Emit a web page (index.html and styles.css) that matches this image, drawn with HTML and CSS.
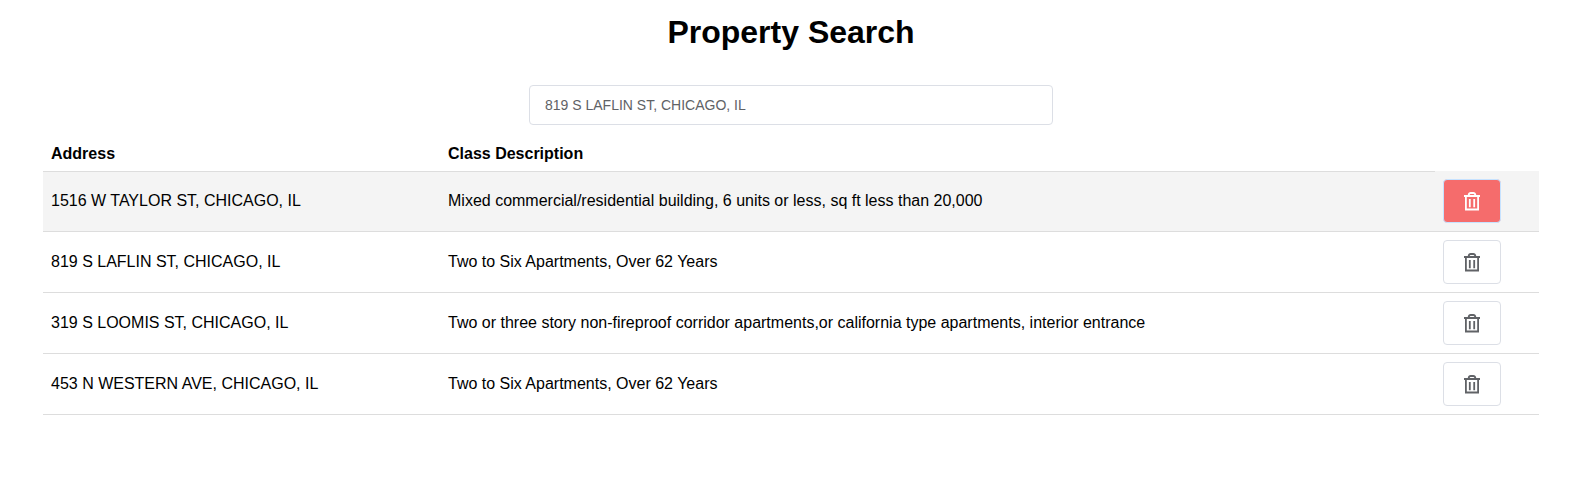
FILE: index.html
```html
<!DOCTYPE html>
<html lang="en">
<head>
<meta charset="utf-8">
<title>Property Search</title>
<link rel="stylesheet" href="styles.css">
</head>
<body>
<svg class="sprite" width="0" height="0" aria-hidden="true">
  <symbol id="trash" viewBox="0 0 16 19">
    <g fill="none" stroke="currentColor">
      <path d="M4.7 4V3Q5 1 6.7 1h2.6Q11 1 11.3 3V4" stroke-width="1.8"/>
      <path d="M0 4h16" stroke-width="2"/>
      <path d="M1.9 4v13.5h12.2V4M5.8 7v8.2M10.2 7v8.2" stroke-width="1.8"/>
    </g>
  </symbol>
</svg>
<main class="page">
  <h1 class="title">Property Search</h1>
  <input class="search" type="text" aria-label="Address" value="819 S LAFLIN ST, CHICAGO, IL">
  <table class="properties">
    <colgroup><col class="col-address"><col class="col-class"><col class="col-action"></colgroup>
    <thead>
      <tr><th>Address</th><th>Class Description</th></tr>
    </thead>
    <tbody>
      <tr class="selected">
        <td class="text">1516 W TAYLOR ST, CHICAGO, IL</td>
        <td class="text">Mixed commercial/residential building, 6 units or less, sq ft less than 20,000</td>
        <td><button class="delete delete-active" aria-label="Delete"><svg class="icon"><use href="#trash"/></svg></button></td>
      </tr>
      <tr>
        <td class="text">819 S LAFLIN ST, CHICAGO, IL</td>
        <td class="text">Two to Six Apartments, Over 62 Years</td>
        <td><button class="delete" aria-label="Delete"><svg class="icon"><use href="#trash"/></svg></button></td>
      </tr>
      <tr>
        <td class="text">319 S LOOMIS ST, CHICAGO, IL</td>
        <td class="text">Two or three story non-fireproof corridor apartments,or california type apartments, interior entrance</td>
        <td><button class="delete" aria-label="Delete"><svg class="icon"><use href="#trash"/></svg></button></td>
      </tr>
      <tr>
        <td class="text">453 N WESTERN AVE, CHICAGO, IL</td>
        <td class="text">Two to Six Apartments, Over 62 Years</td>
        <td><button class="delete" aria-label="Delete"><svg class="icon"><use href="#trash"/></svg></button></td>
      </tr>
    </tbody>
  </table>
</main>
</body>
</html>
```
FILE: styles.css
```css
* {
  box-sizing: border-box;
}

body {
  margin: 0;
  background: #fff;
  color: #000;
  font-family: "Liberation Sans", Arial, sans-serif;
  font-size: 16px;
}

.sprite {
  display: block;
}

.page {
  display: flex;
  flex-direction: column;
  align-items: center;
  width: 1496px;
  margin-left: 43px;
}

.title {
  margin: 14px 0 34px;
  font-size: 32px;
  line-height: 37px;
}

.search {
  width: 524px;
  height: 40px;
  padding: 0 15px;
  border: 1px solid #dcdfe6;
  border-radius: 4px;
  background: #fff;
  color: #606266;
  font: 14px "Liberation Sans", Arial, sans-serif;
  outline: none;
}

.properties {
  width: 100%;
  margin-top: 12px;
  border-collapse: separate;
  border-spacing: 0;
  table-layout: fixed;
}

.col-address {
  width: 397px;
}

.col-class {
  width: 995px;
}

.col-action {
  width: 104px;
}

.properties th,
.properties td {
  padding: 8px;
  line-height: 18px;
  text-align: left;
}

.properties td {
  height: 61px;
  border-bottom: 1px solid #ddd;
  vertical-align: middle;
}

.selected .text {
  box-shadow: inset 0 1px #ddd;
}

.selected {
  background: #f4f4f4;
}

.delete {
  display: flex;
  align-items: center;
  justify-content: center;
  width: 58px;
  height: 44px;
  padding: 0;
  border: 1px solid #dcdfe6;
  border-radius: 4px;
  background: #fff;
  color: #606266;
}

.delete-active {
  border-color: #c6e2ff;
  background: #f56c6c;
  color: #fff;
}

.icon {
  width: 16px;
  height: 19px;
}
```
